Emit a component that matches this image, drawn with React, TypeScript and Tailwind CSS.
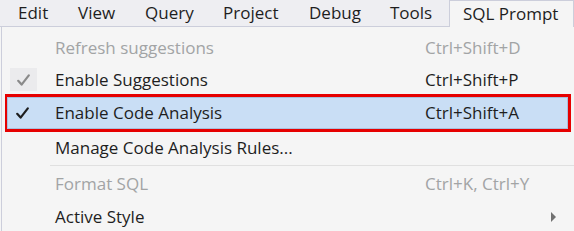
import { ReactNode } from "react";

const font = { fontFamily: '"Open Sans", "Noto Sans", sans-serif' };

const menuBar = [
  { label: "Edit", w: "w-[60px]" },
  { label: "View", w: "w-[67px]" },
  { label: "Query", w: "w-[78px]" },
  { label: "Project", w: "w-[86px]" },
  { label: "Debug", w: "w-[81px]" },
  { label: "Tools", w: "w-[59px]" },
];

const Check = ({ color }: { color: string }) => (
  <svg width="13" height="12" viewBox="0 0 13 12">
    <path d="M1.2 6.8 L4.6 10.6 L11.8 1.4" fill="none" stroke={color} strokeWidth="2.2" strokeLinecap="round" strokeLinejoin="round" />
  </svg>
);

type RowProps = {
  label: string;
  shortcut?: string;
  disabled?: boolean;
  check?: ReactNode;
  arrow?: boolean;
  h: string;
  lead?: string;
};

const Row = ({ label, shortcut, disabled, check, arrow, h, lead = "w-[53px]" }: RowProps) => {
  const color = disabled ? "text-[#a2a4a5]" : "text-[#1e1e1e]";
  return (
    <div className={`flex items-center ${h} ${color}`}>
      <div className={`flex ${lead} shrink-0 justify-start`}>{check}</div>
      <div className="w-[370px] shrink-0">{label}</div>
      <div className="w-[126px] shrink-0">{shortcut}</div>
      {arrow && (
        <div className="h-0 w-0 border-y-[5px] border-l-[5px] border-y-transparent border-l-[#717171]" />
      )}
    </div>
  );
};

export default function App() {
  return (
    <div className="h-[231px] w-[574px] overflow-hidden bg-[#f5f5f5] text-[17px]" style={font}>
      {/* menu bar */}
      <div className="flex h-[27px] border-b border-[#cccedb] bg-[#eeeef2] pl-[18px]">
        {menuBar.map((m) => (
          <div key={m.label} className={`${m.w} flex items-center text-[#1e1e1e]`}>
            {m.label}
          </div>
        ))}
        <div className="-mb-px flex flex-1 items-center border-x border-t border-[#cccedb] bg-[#f5f5f5] pl-[13px] text-[#1e1e1e]">
          SQL Prompt
        </div>
      </div>

      {/* dropdown */}
      <div className="ml-[1px] border-l border-[#cccedb] pt-[4px]">
        <Row label="Refresh suggestions" shortcut="Ctrl+Shift+D" disabled h="h-[34px]" />
        <Row
          label="Enable Suggestions"
          shortcut="Ctrl+Shift+P"
          h="h-[29px]"
          check={
            <div className="ml-[8px] flex h-[23px] w-[27px] items-center justify-center bg-[#ebebed]">
              <Check color="#8a8a8a" />
            </div>
          }
        />
        <div className="mx-[3px] border-[3px] border-[#e60000]">
          <div className="-ml-[1px] flex h-[32px] items-center border border-[#a9bfdc] bg-[#c9def5]">
            <Row
              label="Enable Code Analysis"
              shortcut="Ctrl+Shift+A"
              h="h-[30px]"
              lead="w-[47px]"
              check={<div className="pl-[8px]"><Check color="#1e1e1e" /></div>}
            />
          </div>
        </div>
        <Row label="Manage Code Analysis Rules..." h="h-[31px]" />
        <div className="flex h-[4px] items-center pl-[48px]">
          <div className="h-px w-full bg-[#e0e0e0]" />
        </div>
        <Row label="Format SQL" shortcut="Ctrl+K, Ctrl+Y" disabled h="h-[34px]" />
        <Row label="Active Style" arrow h="h-[32px]" />
      </div>
    </div>
  );
}
